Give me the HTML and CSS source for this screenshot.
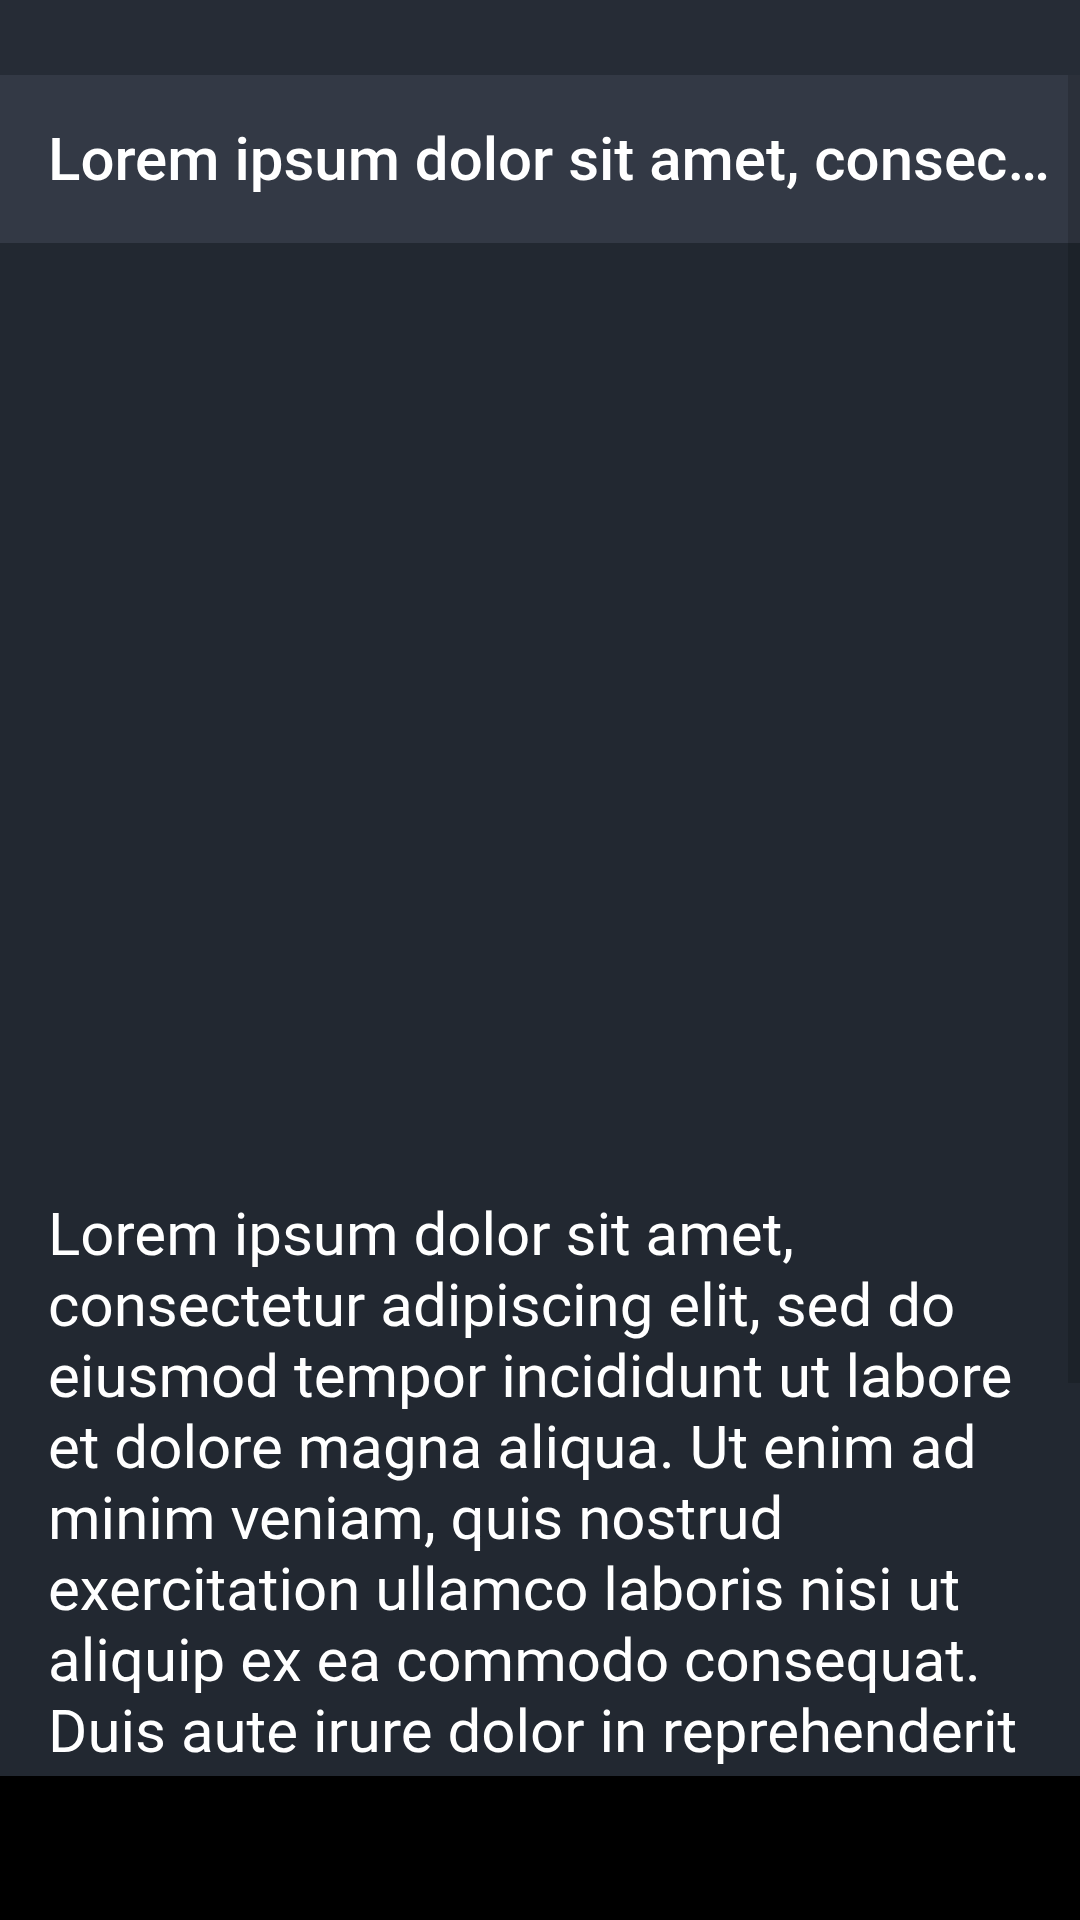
FILE: index.html
```html
<!DOCTYPE html>
<html lang="en">
<head>
<meta charset="utf-8">
<title>Article</title>
<link rel="stylesheet" href="styles.css">
</head>
<body>
<div class="screen">
  <div class="status-bar"></div>
  <div class="scroller">
    <header class="app-bar">
      <h1 class="title">Lorem ipsum dolor sit amet, consectetur adipiscing elit, sed do eiusmod tempor</h1>
    </header>
    <main class="content">
      <div class="media"></div>
      <p class="body-text">Lorem ipsum dolor sit amet, consectetur adipiscing elit, sed do eiusmod tempor incididunt ut labore et dolore magna aliqua. Ut enim ad minim veniam, quis nostrud exercitation ullamco laboris nisi ut aliquip ex ea commodo consequat. Duis aute irure dolor in reprehenderit in voluptate velit esse cillum dolore eu fugiat nulla pariatur. Excepteur sint occaecat cupidatat non proident, sunt in culpa qui officia deserunt mollit anim id est laborum.</p>
    </main>
    <div class="scroll-thumb"></div>
  </div>
  <div class="nav-bar"></div>
</div>
</body>
</html>
```
FILE: styles.css
```css
html, body {
  margin: 0;
  padding: 0;
  background: #000;
}

.screen {
  width: 1080px;
  height: 1920px;
  display: flex;
  flex-direction: column;
  font-family: Roboto, "Noto Sans", sans-serif;
  color: #fff;
  overflow: hidden;
}

.status-bar {
  height: 75px;
  flex: none;
  background: #262c36;
}

.scroller {
  position: relative;
  height: 1701px;
  flex: none;
  overflow: hidden;
  background: #222831;
}

.app-bar {
  height: 168px;
  background: #333945;
  display: flex;
  align-items: center;
  padding: 0 30px 0 48px;
}

.title {
  margin: 0;
  font-size: 60px;
  font-weight: 500;
  line-height: 71px;
  white-space: nowrap;
  overflow: hidden;
  text-overflow: ellipsis;
  min-width: 0;
}

.content {
  display: flex;
  flex-direction: column;
}

.media {
  height: 956px;
}

.body-text {
  margin: 0;
  padding: 0 48px;
  font-size: 60px;
  line-height: 71px;
  font-weight: 400;
}

.scroll-thumb {
  position: absolute;
  top: 0;
  right: 0;
  width: 12px;
  height: 1308px;
  background: rgba(0, 0, 0, 0.15);
}

.nav-bar {
  height: 144px;
  flex: none;
  background: #000;
}
```
